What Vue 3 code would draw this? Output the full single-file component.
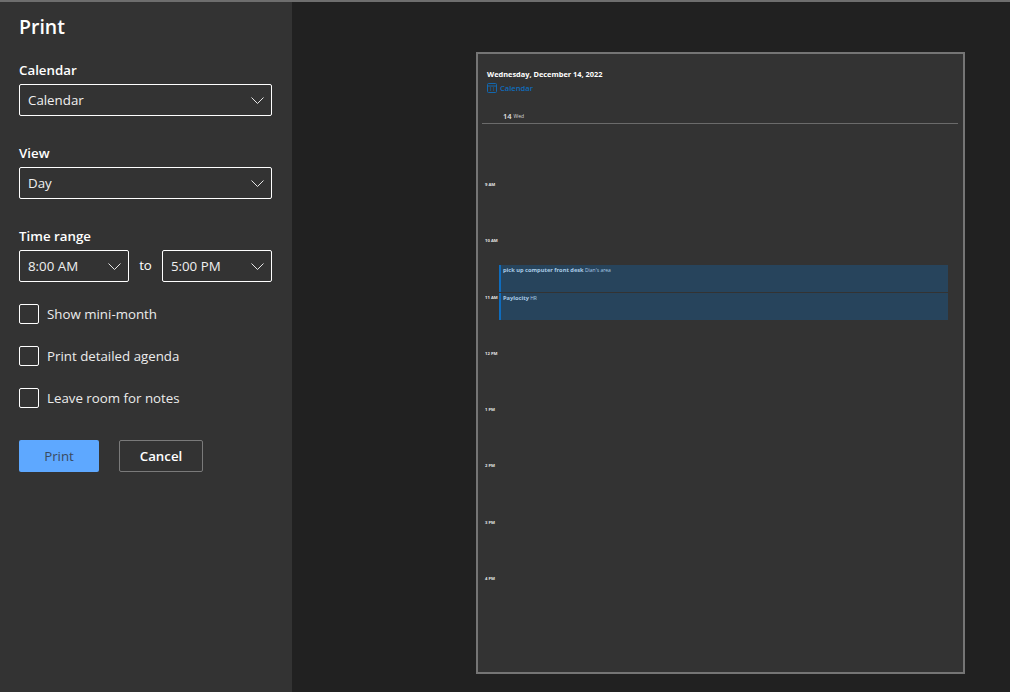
<script setup>
const checks = ['Show mini-month', 'Print detailed agenda', 'Leave room for notes']
const hours = ['9 AM', '10 AM', '11 AM', '12 PM', '1 PM', '2 PM', '3 PM', '4 PM']
const events = [
  { title: 'pick up computer front desk', where: "Dian's area" },
  { title: 'Paylocity', where: 'HR' }
]
</script>

<template>
  <div class="print-page">
    <div class="side-panel">
      <h1 class="panel-title">Print</h1>

      <div class="field">
        <label class="field-label">Calendar</label>
        <div class="select">
          <span>Calendar</span>
          <svg class="chevron" viewBox="0 0 13 7"><path d="M0.5 0.5L6.5 6.5L12.5 0.5" /></svg>
        </div>
      </div>

      <div class="field">
        <label class="field-label">View</label>
        <div class="select">
          <span>Day</span>
          <svg class="chevron" viewBox="0 0 13 7"><path d="M0.5 0.5L6.5 6.5L12.5 0.5" /></svg>
        </div>
      </div>

      <div class="field">
        <label class="field-label">Time range</label>
        <div class="range-row">
          <div class="select">
            <span>8:00 AM</span>
            <svg class="chevron" viewBox="0 0 13 7"><path d="M0.5 0.5L6.5 6.5L12.5 0.5" /></svg>
          </div>
          <span class="range-to">to</span>
          <div class="select">
            <span>5:00 PM</span>
            <svg class="chevron" viewBox="0 0 13 7"><path d="M0.5 0.5L6.5 6.5L12.5 0.5" /></svg>
          </div>
        </div>
      </div>

      <div class="check-list">
        <div v-for="item in checks" :key="item" class="check-row">
          <span class="check-box"></span>
          <span>{{ item }}</span>
        </div>
      </div>

      <div class="actions">
        <button class="btn btn-print">Print</button>
        <button class="btn btn-cancel">Cancel</button>
      </div>
    </div>

    <div class="preview">
      <div class="sheet">
        <div class="sheet-date">Wednesday, December 14, 2022</div>
        <div class="sheet-cal">
          <svg class="cal-icon" viewBox="0 0 10 10">
            <rect x="0.5" y="0.5" width="9" height="9" rx="1" />
            <path d="M0.5 3H9.5M3 5H4M6 5H7M3 7H4M6 7H7" />
          </svg>
          <span>Calendar</span>
        </div>
        <div class="day-head">
          <span class="day-num">14</span>
          <span class="day-name">Wed</span>
        </div>
        <div class="day-grid">
          <div class="hour-col">
            <div v-for="h in hours" :key="h" class="hour">{{ h }}</div>
          </div>
          <div class="event-col">
            <div v-for="ev in events" :key="ev.title" class="event">
              <b>{{ ev.title }}</b> {{ ev.where }}
            </div>
          </div>
        </div>
      </div>
    </div>
  </div>
</template>

<style>
html, body {
  margin: 0;
  background: #212121;
}
</style>

<style scoped>
.print-page {
  width: 1010px;
  height: 692px;
  box-sizing: border-box;
  display: flex;
  border-top: 2px solid #6e6e6e;
  background: #212121;
  color: #fff;
  font-family: "Open Sans", "Noto Sans", sans-serif;
  font-size: 13.3px;
  overflow: hidden;
}

/* Left panel */
.side-panel {
  width: 292px;
  flex-shrink: 0;
  box-sizing: border-box;
  padding: 11px 20px 0 19px;
  background: #333333;
}

.panel-title {
  margin: 0 0 19px;
  font-size: 19.5px;
  line-height: 28px;
  font-weight: 600;
}

.field {
  margin-bottom: 27px;
}

.field:nth-of-type(3) {
  margin-bottom: 22px;
}

.field-label {
  display: block;
  height: 24px;
  font-size: 13.3px;
  line-height: 20px;
  font-weight: 600;
}

.select {
  flex: 1;
  height: 32px;
  box-sizing: border-box;
  display: flex;
  align-items: center;
  justify-content: space-between;
  padding: 0 7px 0 8px;
  border: 1px solid #fff;
  border-radius: 2px;
  color: #f0f0f0;
}

.chevron {
  width: 13px;
  height: 7px;
  fill: none;
  stroke: #e6e6e6;
  stroke-width: 1;
}

.range-row {
  display: flex;
  align-items: center;
  gap: 10px;
}

.range-to {
  margin-top: -3px;
}

.check-list {
  display: flex;
  flex-direction: column;
  gap: 22px;
}

.check-row {
  display: flex;
  align-items: center;
  gap: 8px;
  height: 20px;
  color: #ececec;
}

.check-box {
  width: 20px;
  height: 20px;
  box-sizing: border-box;
  border: 1px solid #fff;
  border-radius: 2px;
}

.actions {
  display: flex;
  gap: 20px;
  margin-top: 32px;
}

.btn {
  height: 32px;
  box-sizing: border-box;
  border-radius: 2px;
  font-family: inherit;
  font-size: 13.3px;
}

.btn-print {
  width: 80px;
  border: none;
  background: #5ea8ff;
  color: #3a4a5e;
}

.btn-cancel {
  width: 84px;
  border: 1px solid #7a7a7a;
  background: transparent;
  color: #fff;
  font-weight: 600;
}

/* Preview */
.preview {
  flex: 1;
  padding: 50px 45px 0 184px;
}

.sheet {
  height: 622px;
  box-sizing: border-box;
  padding: 14px 5px 0 4px;
  border: 2px solid #757575;
  background: #333333;
  font-size: 7px;
}

.sheet-date {
  margin-left: 5px;
  height: 13px;
  font-size: 7.4px;
  line-height: 13px;
  font-weight: 700;
}

.sheet-cal {
  margin-left: 5px;
  display: flex;
  align-items: center;
  gap: 3px;
  height: 13px;
  color: #0f6cbd;
  font-size: 7.6px;
  font-weight: 600;
}

.cal-icon {
  width: 10px;
  height: 10px;
  flex-shrink: 0;
  fill: none;
  stroke: #1268b0;
  stroke-width: 1;
}

.day-head {
  display: flex;
  align-items: center;
  gap: 2px;
  height: 13px;
  margin-top: 15px;
  padding-left: 21px;
  padding-bottom: 1px;
  border-bottom: 1px solid #6b6b6b;
}

.day-num {
  font-size: 7.5px;
  font-weight: 600;
  color: #e6e6e6;
}

.day-name {
  font-size: 5px;
  color: #dcdcdc;
}

.day-grid {
  display: flex;
  padding-top: 55px;
}

.hour-col {
  width: 17px;
  flex-shrink: 0;
  padding-left: 3px;
  box-sizing: border-box;
}

.hour {
  height: 56.3px;
  font-size: 4.2px;
  line-height: 12px;
  font-weight: 700;
  color: #e4e4e4;
  white-space: nowrap;
}

.event-col {
  flex: 1;
  margin-right: 10px;
  padding-top: 86px;
  display: flex;
  flex-direction: column;
  gap: 1px;
}

.event {
  height: 27px;
  box-sizing: border-box;
  padding: 1px 0 0 2px;
  border-left: 2px solid #0f6cbd;
  background: #27445c;
  color: #a9cbe6;
  font-size: 5px;
  line-height: 9px;
}

.event b {
  font-size: 5.7px;
  font-weight: 700;
}
</style>
